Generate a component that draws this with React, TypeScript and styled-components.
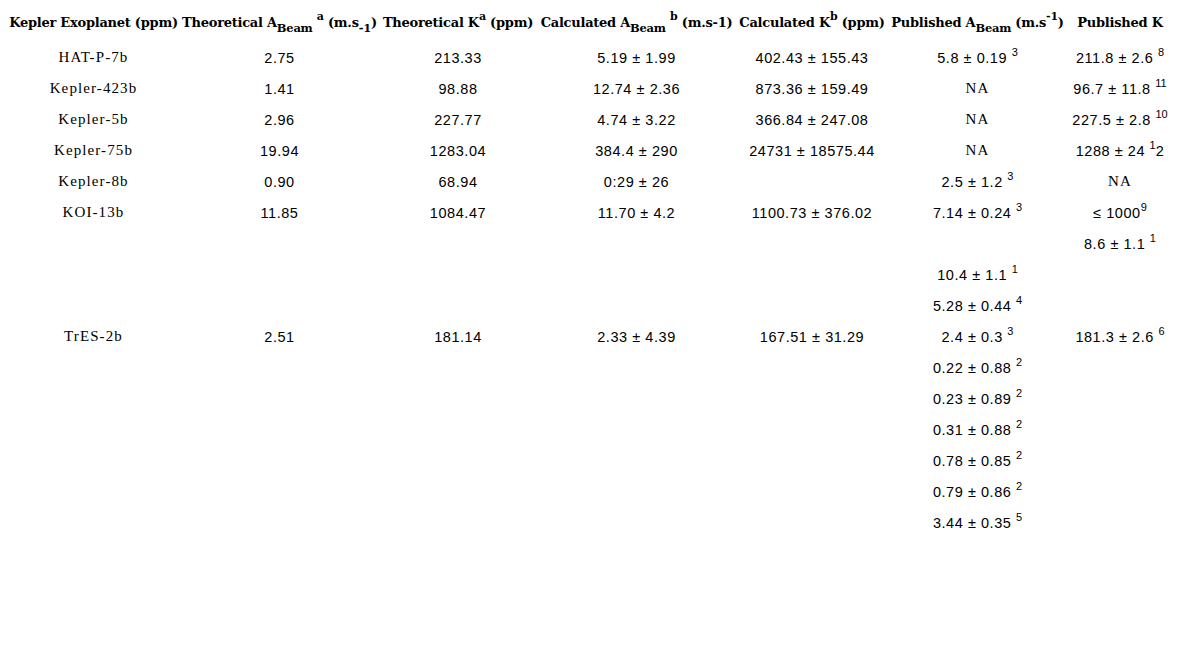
import styled, { createGlobalStyle } from 'styled-components';

const GlobalStyle = createGlobalStyle`
  body {
    margin: 0;
    background: #ffffff;
    color: #000000;
  }
`;

const Page = styled.div`
  padding: 0 8px;
`;

const Table = styled.div`
  display: grid;
  grid-template-columns: 171px 201px 156px 201px 150px 181px 104px;
  grid-template-rows: 42px;
  grid-auto-rows: 31px;
`;

const HeadCell = styled.div`
  display: flex;
  align-items: center;
  justify-content: center;
  white-space: nowrap;
  font-family: 'DejaVu Serif', 'Liberation Serif', serif;
  font-weight: bold;
  font-size: 13px;
  letter-spacing: -0.25px;
  padding-top: 3px;
`;

const Cell = styled.div<{ $serif?: boolean }>`
  display: flex;
  align-items: center;
  justify-content: center;
  white-space: nowrap;
  font-family: ${(p) => (p.$serif ? "'Liberation Serif', serif" : "'Liberation Sans', sans-serif")};
  font-size: ${(p) => (p.$serif ? '15px' : '14.5px')};
  letter-spacing: ${(p) => (p.$serif ? '1.1px' : '0.55px')};
`;

const Sup = styled.sup`
  font-size: 11px;
  vertical-align: 7px;
  line-height: 0;
  letter-spacing: 0;
`;

const Sub = styled.sub`
  font-size: 11.5px;
  vertical-align: -5px;
  line-height: 0;
`;

const HeadSup = styled.sup`
  font-size: 11px;
  vertical-align: 7px;
  line-height: 0;
`;

type Val = { t: string; sup?: string; after?: string; serif?: boolean };

const v = (t: string, sup?: string, after?: string): Val => ({ t, sup, after });
const w = (t: string): Val => ({ t, serif: true });
const e: Val = { t: '' };

const rows: Val[][] = [
  [w('HAT-P-7b'), v('2.75'), v('213.33'), v('5.19 ± 1.99'), v('402.43 ± 155.43'), v('5.8 ± 0.19 ', '3'), v('211.8 ± 2.6 ', '8')],
  [w('Kepler-423b'), v('1.41'), v('98.88'), v('12.74 ± 2.36'), v('873.36 ± 159.49'), w('NA'), v('96.7 ± 11.8 ', '11')],
  [w('Kepler-5b'), v('2.96'), v('227.77'), v('4.74 ± 3.22'), v('366.84 ± 247.08'), w('NA'), v('227.5 ± 2.8 ', '10')],
  [w('Kepler-75b'), v('19.94'), v('1283.04'), v('384.4 ± 290'), v('24731 ± 18575.44'), w('NA'), v('1288 ± 24 ', '1', '2')],
  [w('Kepler-8b'), v('0.90'), v('68.94'), v('0:29 ± 26'), e, v('2.5 ± 1.2 ', '3'), w('NA')],
  [w('KOI-13b'), v('11.85'), v('1084.47'), v('11.70 ± 4.2'), v('1100.73 ± 376.02'), v('7.14 ± 0.24 ', '3'), v('≤ 1000', '9')],
  [e, e, e, e, e, e, v('8.6 ± 1.1 ', '1')],
  [e, e, e, e, e, v('10.4 ± 1.1 ', '1'), e],
  [e, e, e, e, e, v('5.28 ± 0.44 ', '4'), e],
  [w('TrES-2b'), v('2.51'), v('181.14'), v('2.33 ± 4.39'), v('167.51 ± 31.29'), v('2.4 ± 0.3 ', '3'), v('181.3 ± 2.6 ', '6')],
  [e, e, e, e, e, v('0.22 ± 0.88 ', '2'), e],
  [e, e, e, e, e, v('0.23 ± 0.89 ', '2'), e],
  [e, e, e, e, e, v('0.31 ± 0.88 ', '2'), e],
  [e, e, e, e, e, v('0.78 ± 0.85 ', '2'), e],
  [e, e, e, e, e, v('0.79 ± 0.86 ', '2'), e],
  [e, e, e, e, e, v('3.44 ± 0.35 ', '5'), e],
];

const App = () => (
  <Page>
    <GlobalStyle />
    <Table>
      <HeadCell>
        <span>Kepler Exoplanet (ppm)</span>
      </HeadCell>
      <HeadCell>
        <span>
          Theoretical A<Sub>Beam</Sub> <HeadSup>a</HeadSup> (m.s<Sub>-1</Sub>)
        </span>
      </HeadCell>
      <HeadCell>
        <span>
          Theoretical K<HeadSup>a</HeadSup> (ppm)
        </span>
      </HeadCell>
      <HeadCell>
        <span>
          Calculated A<Sub>Beam</Sub> <HeadSup>b</HeadSup> (m.s-1)
        </span>
      </HeadCell>
      <HeadCell>
        <span>
          Calculated K<HeadSup>b</HeadSup> (ppm)
        </span>
      </HeadCell>
      <HeadCell>
        <span>
          Published A<Sub>Beam</Sub> (m.s<HeadSup>-1</HeadSup>)
        </span>
      </HeadCell>
      <HeadCell>
        <span>Published K</span>
      </HeadCell>
      {rows.map((row, i) =>
        row.map((c, j) => (
          <Cell key={`${i}-${j}`} $serif={c.serif}>
            <span>
              {c.t}
              {c.sup && <Sup>{c.sup}</Sup>}
              {c.after}
            </span>
          </Cell>
        ))
      )}
    </Table>
  </Page>
);

export default App;
